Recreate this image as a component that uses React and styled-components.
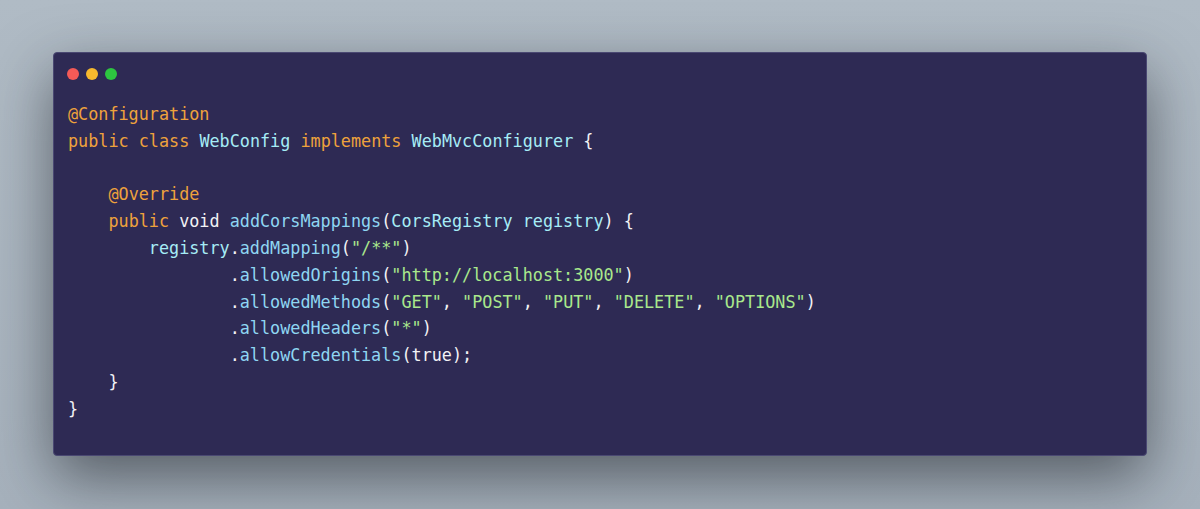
import React from 'react';
import styled, { createGlobalStyle } from 'styled-components';

const GlobalStyle = createGlobalStyle`
  html, body {
    margin: 0;
    padding: 0;
    background: #a9b4bf;
  }
`;

const Page = styled.div`
  width: 1200px;
  height: 509px;
  box-sizing: border-box;
  padding: 52px 53px 0 53px;
  background: linear-gradient(180deg, #b0bbc5 0%, #a6b1bc 100%);
`;

const Window = styled.div`
  width: 1094px;
  height: 404px;
  box-sizing: border-box;
  background: #2e2a54;
  border: 1px solid #4a4872;
  border-radius: 4px;
  padding: 15px 14px 0 13px;
  box-shadow: 0 22px 60px rgba(20, 24, 30, 0.55);
`;

const Dots = styled.div`
  display: flex;
  gap: 7px;
`;

const Dot = styled.span`
  width: 12px;
  height: 12px;
  border-radius: 50%;
  background: ${(p) => p.color};
`;

const Code = styled.pre`
  margin: 21px 0 0 1px;
  font-family: "DejaVu Sans Mono", monospace;
  font-size: 16.8px;
  line-height: 26.8px;
  color: #f2f2f5;
`;

const Kw = styled.span`
  color: #eea23c;
`;

const Type = styled.span`
  color: #a6ecf6;
`;

const Fn = styled.span`
  color: #8fd6f2;
`;

const Str = styled.span`
  color: #a9e88c;
`;

const App = () => (
  <>
    <GlobalStyle />
    <Page>
      <Window>
        <Dots>
          <Dot color="#f45a57" />
          <Dot color="#f7b92e" />
          <Dot color="#2dc540" />
        </Dots>
        <Code>
          <Kw>@Configuration</Kw>{'\n'}
          <Kw>public</Kw> <Kw>class</Kw> <Type>WebConfig</Type> <Kw>implements</Kw> <Type>WebMvcConfigurer</Type> {'{'}{'\n'}
          {'\n'}
          {'    '}<Kw>@Override</Kw>{'\n'}
          {'    '}<Kw>public</Kw> void <Fn>addCorsMappings</Fn>(<Type>CorsRegistry</Type> <Type>registry</Type>) {'{'}{'\n'}
          {'        '}<Type>registry</Type>.<Fn>addMapping</Fn>(<Str>"/**"</Str>){'\n'}
          {'                '}.<Fn>allowedOrigins</Fn>(<Str>"http://localhost:3000"</Str>){'\n'}
          {'                '}.<Fn>allowedMethods</Fn>(<Str>"GET"</Str>, <Str>"POST"</Str>, <Str>"PUT"</Str>, <Str>"DELETE"</Str>, <Str>"OPTIONS"</Str>){'\n'}
          {'                '}.<Fn>allowedHeaders</Fn>(<Str>"*"</Str>){'\n'}
          {'                '}.<Fn>allowCredentials</Fn>(true);{'\n'}
          {'    '}{'}'}{'\n'}
          {'}'}
        </Code>
      </Window>
    </Page>
  </>
);

export default App;
